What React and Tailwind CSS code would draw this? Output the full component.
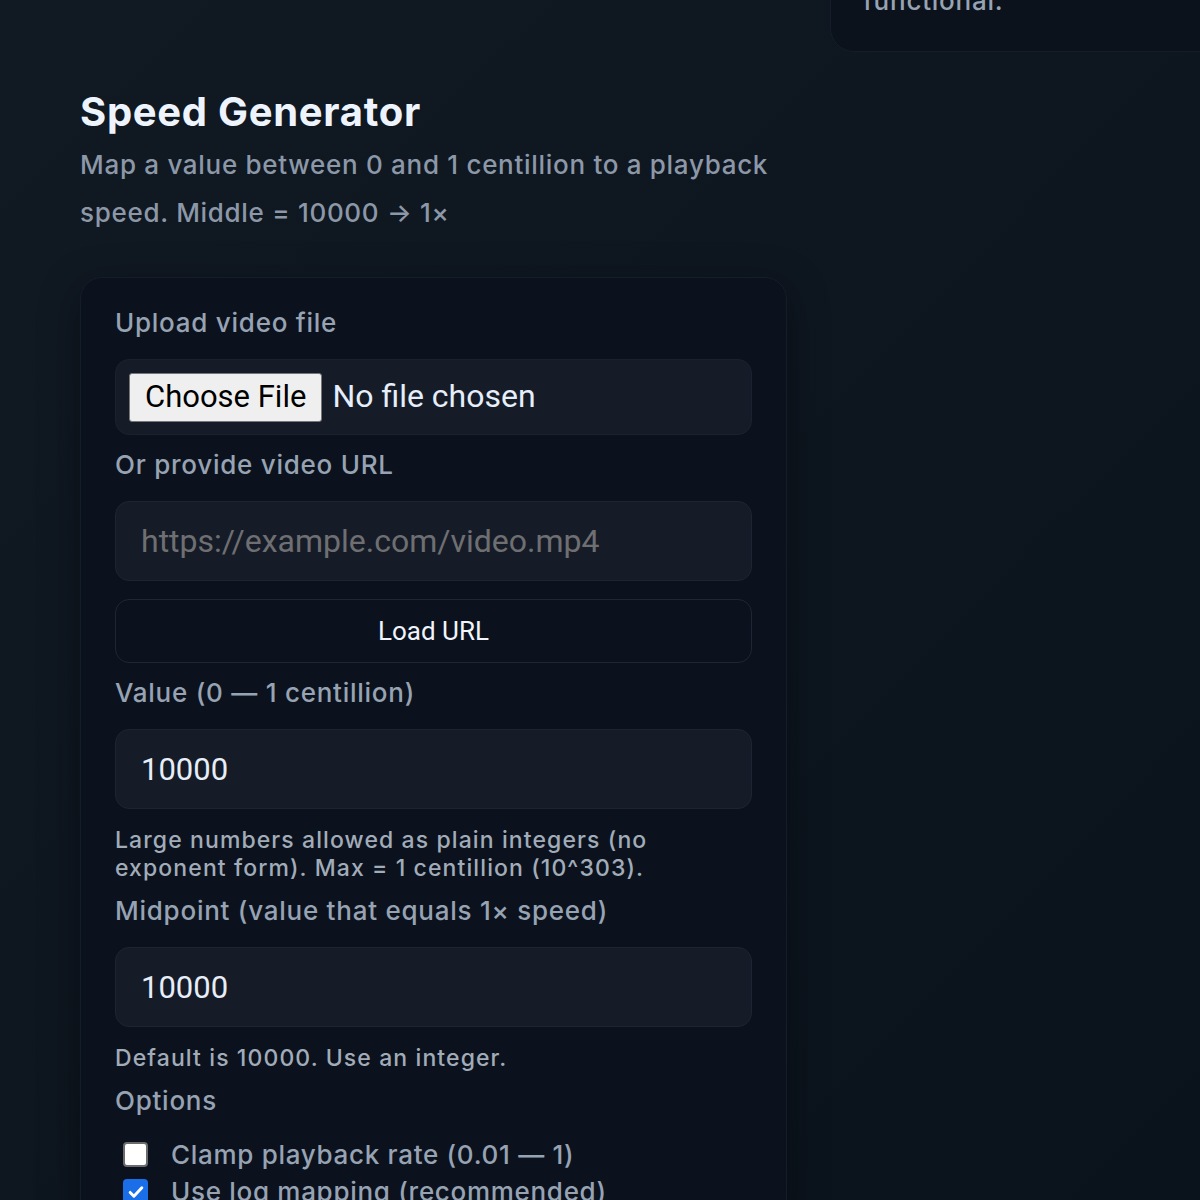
import React from 'react';

const sans = "font-['Inter','Noto_Sans',sans-serif]";
const roboto = "font-['Roboto','Liberation_Sans',sans-serif]";

const Label = ({ children, className = '' }) => (
  <div className={`text-[26px] leading-[36px] font-medium tracking-[0.75px] text-[#97a3b3] ${className}`}>{children}</div>
);

const Hint = ({ children, className = '' }) => (
  <p className={`text-[23px] leading-[28px] font-medium tracking-[1.1px] text-[#a2acb9] ${className}`}>{children}</p>
);

const TextInput = ({ value, placeholder, className = '' }) => (
  <input
    type="text"
    defaultValue={value}
    placeholder={placeholder}
    className={`${roboto} block w-full h-[80px] rounded-[14px] bg-[#151c28] border border-[#1d2532] px-[25px] text-[31px] text-[#e8eef7] placeholder:text-[32px] placeholder:text-[#6f6f72] outline-none ${className}`}
  />
);

const Check = ({ checked, label, className = '' }) => (
  <label className={`flex items-center h-[37px] ${className}`}>
    <span
      className={`ml-[8px] w-[25px] h-[25px] rounded-[4px] flex items-center justify-center ${
        checked ? 'bg-[#1a6fe8]' : 'bg-white border-2 border-[#6b6b6b]'
      }`}
    >
      {checked && (
        <svg viewBox="0 0 24 24" className="w-[20px] h-[20px]" fill="none" stroke="white" strokeWidth="3.5" strokeLinecap="round" strokeLinejoin="round">
          <path d="M5 12.5l4.5 4.5L19 7" />
        </svg>
      )}
    </span>
    <span className="ml-[23px] text-[26px] font-medium tracking-[0.7px] text-[#97a3b3]">{label}</span>
  </label>
);

const App = () => {
  return (
    <div className={`${sans} w-[1200px] h-[1200px] overflow-hidden bg-gradient-to-br from-[#111923] to-[#0a121b] flex`}>
      {/* Main column */}
      <div className="w-[787px] shrink-0 pl-[80px] pt-[88px]">
        <h1 className="text-[40px] leading-[48px] font-bold tracking-[0.7px] text-[#eef4fd]">Speed Generator</h1>
        <p className="mt-[5px] text-[26px] leading-[48px] font-medium text-[#8c98a8] tracking-[0.7px]">
          Map a value between 0 and 1 centillion to a playback speed. Middle = 10000 → 1×
        </p>

        <div className="mt-[40px] rounded-[22px] bg-[#0b121d] border border-[#151d29] px-[34px] pt-[27px] pb-[40px] shadow-[0_10px_40px_rgba(0,0,0,0.35)]">
          <Label>Upload video file</Label>
          <div className="mt-[18px] h-[76px] rounded-[14px] bg-[#151c28] border border-[#1a2230] flex items-center px-[13px]">
            <input
              type="file"
              className={`${roboto} text-[32px] text-[#e6eefa] file:mr-[10px] file:h-[49px] file:px-[15px] file:bg-[#efefef] file:text-black file:text-[31px] file:border file:border-[#767676] file:rounded-[3px]`}
            />
          </div>

          <Label className="mt-[12px]">Or provide video URL</Label>
          <TextInput placeholder="https://example.com/video.mp4" className="mt-[18px]" />
          <button className={`${roboto} mt-[18px] w-full h-[64px] rounded-[14px] border border-[#1e2633] bg-transparent text-[26px] text-[#f1f5fb]`}>
            Load URL
          </button>

          <Label className="mt-[12px]">Value (0 — 1 centillion)</Label>
          <TextInput value="10000" className="mt-[18px]" />
          <Hint className="mt-[17px]">
            Large numbers allowed as plain integers (no exponent form). Max = 1 centillion (10^303).
          </Hint>

          <Label className="mt-[11px]">Midpoint (value that equals 1× speed)</Label>
          <TextInput value="10000" className="mt-[18px]" />
          <Hint className="mt-[17px]">Default is 10000. Use an integer.</Hint>

          <Label className="mt-[11px]">Options</Label>
          <div className="mt-[17px] flex flex-col">
            <Check label="Clamp playback rate (0.01 — 1)" />
            <Check checked label="Use log mapping (recommended)" />
          </div>
        </div>
      </div>

      {/* Side column */}
      <div className="ml-[43px] flex-1 min-w-0">
        <div className="-mt-[60px] w-[420px] rounded-[24px] bg-[#0b121c] border border-[#151d28] pl-[32px] pt-[40px] pb-[30px]">
          <p className="text-[26px] leading-[40px] font-medium tracking-[0.75px] text-[#97a3b3]">functional.</p>
        </div>
      </div>
    </div>
  );
};

export default App;
